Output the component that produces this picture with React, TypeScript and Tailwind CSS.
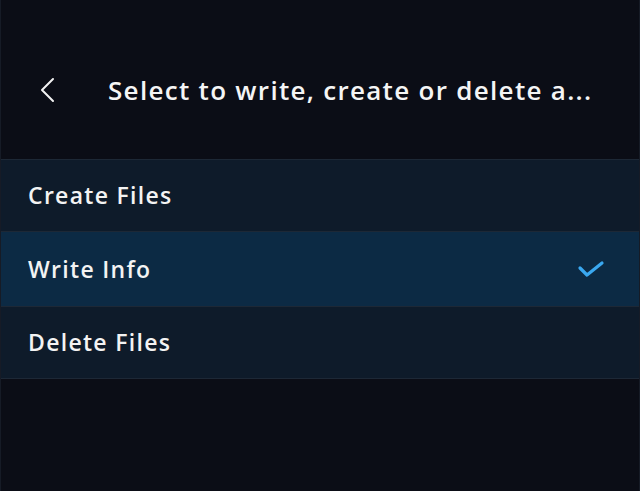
import React from "react";

const rows = [
  { label: "Create Files", selected: false, h: "h-[72px]" },
  { label: "Write Info", selected: true, h: "h-[75px]" },
  { label: "Delete Files", selected: false, h: "h-[72px]" },
];

export default function App() {
  return (
    <div
      className="w-[640px] h-[491px] bg-[#0b0d16] flex flex-col overflow-hidden border-x border-[#161b26]"
      style={{ fontFamily: "'Open Sans', Lato, sans-serif" }}
    >
      <div className="h-[159px] flex items-center shrink-0 pt-[20px]">
        <div className="w-[107px] pl-[37px] flex items-center">
          <svg width="18" height="26" viewBox="0 0 18 26" fill="none">
            <path d="M15 2 L4 13 L15 24" stroke="#f2f2f2" strokeWidth="2" strokeLinecap="round" strokeLinejoin="round" />
          </svg>
        </div>
        <div className="text-[#f5f5f5] text-[26px] font-semibold leading-none tracking-[1.3px] whitespace-nowrap">
          Select to write, create or delete a...
        </div>
      </div>
      <div className="flex flex-col border-t border-[#1d2836]">
        {rows.map((r) => (
          <div
            key={r.label}
            className={`${r.h} flex items-center justify-between pl-[27px] pr-[34px] border-b border-[#1d2836] ${
              r.selected ? "bg-[#0c2a44]" : "bg-[#0e1b2a]"
            }`}
          >
            <span className="text-[#f3f3f3] text-[23px] font-semibold leading-none tracking-[1.3px]">{r.label}</span>
            {r.selected && (
              <svg width="28" height="18" viewBox="0 0 28 18" fill="none">
                <path d="M3 8 L10 15 L25 3" stroke="#3aa8f0" strokeWidth="3.2" strokeLinecap="round" strokeLinejoin="round" />
              </svg>
            )}
          </div>
        ))}
      </div>
      <div className="flex-1" />
    </div>
  );
}
